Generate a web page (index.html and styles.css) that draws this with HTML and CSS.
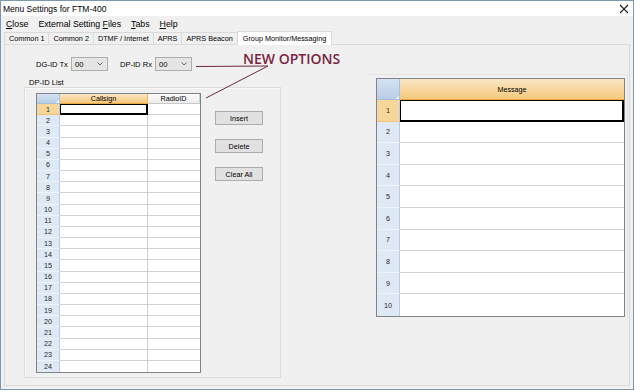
FILE: index.html
```html
<!DOCTYPE html>
<html>
<head>
<meta charset="utf-8">
<link rel="stylesheet" href="styles.css">
</head>
<body>
<div class="window">
  <div class="titlebar">
    <span class="title">Menu Settings for FTM-400</span>
    <svg class="close" width="10" height="10" viewBox="0 0 10 10"><path d="M1 1 L9 9 M9 1 L1 9" stroke="#222" stroke-width="1.1" fill="none"/></svg>
  </div>
  <div class="menubar">
    <span><u>C</u>lose</span>
    <span>External Setting <u>F</u>iles</span>
    <span><u>T</u>abs</span>
    <span><u>H</u>elp</span>
  </div>
  <div class="tabs">
    <div class="tab">Common 1</div>
    <div class="tab">Common 2</div>
    <div class="tab">DTMF / Internet</div>
    <div class="tab">APRS</div>
    <div class="tab">APRS Beacon</div>
    <div class="tab active">Group Monitor/Messaging</div>
  </div>
  <div class="page">
    <div class="left">
      <div class="combos">
        <span class="lbl">DG-ID Tx</span>
        <div class="combo"><span>00</span><svg width="6" height="4" viewBox="0 0 6 4"><path d="M0.5 0.5 L3 3 L5.5 0.5" stroke="#666" fill="none"/></svg></div>
        <span class="lbl">DP-ID Rx</span>
        <div class="combo"><span>00</span><svg width="6" height="4" viewBox="0 0 6 4"><path d="M0.5 0.5 L3 3 L5.5 0.5" stroke="#666" fill="none"/></svg></div>
      </div>
      <div class="listlabel">DP-ID List</div>
      <div class="group">
        <div class="grid idgrid">
          <div class="corner"></div><div class="colh sel">Callsign</div><div class="colh">RadioID</div>
          <div class="rowh sel">1</div><div class="cell cur"></div><div class="cell"></div>
          <div class="rowh">2</div><div class="cell"></div><div class="cell"></div>
          <div class="rowh">3</div><div class="cell"></div><div class="cell"></div>
          <div class="rowh">4</div><div class="cell"></div><div class="cell"></div>
          <div class="rowh">5</div><div class="cell"></div><div class="cell"></div>
          <div class="rowh">6</div><div class="cell"></div><div class="cell"></div>
          <div class="rowh">7</div><div class="cell"></div><div class="cell"></div>
          <div class="rowh">8</div><div class="cell"></div><div class="cell"></div>
          <div class="rowh">9</div><div class="cell"></div><div class="cell"></div>
          <div class="rowh">10</div><div class="cell"></div><div class="cell"></div>
          <div class="rowh">11</div><div class="cell"></div><div class="cell"></div>
          <div class="rowh">12</div><div class="cell"></div><div class="cell"></div>
          <div class="rowh">13</div><div class="cell"></div><div class="cell"></div>
          <div class="rowh">14</div><div class="cell"></div><div class="cell"></div>
          <div class="rowh">15</div><div class="cell"></div><div class="cell"></div>
          <div class="rowh">16</div><div class="cell"></div><div class="cell"></div>
          <div class="rowh">17</div><div class="cell"></div><div class="cell"></div>
          <div class="rowh">18</div><div class="cell"></div><div class="cell"></div>
          <div class="rowh">19</div><div class="cell"></div><div class="cell"></div>
          <div class="rowh">20</div><div class="cell"></div><div class="cell"></div>
          <div class="rowh">21</div><div class="cell"></div><div class="cell"></div>
          <div class="rowh">22</div><div class="cell"></div><div class="cell"></div>
          <div class="rowh">23</div><div class="cell"></div><div class="cell"></div>
          <div class="rowh last">24</div><div class="cell last"></div><div class="cell last"></div>
        </div>
        <div class="buttons">
          <div class="btn">Insert</div>
          <div class="btn">Delete</div>
          <div class="btn">Clear All</div>
        </div>
      </div>
    </div>
    <div class="msgwrap">
      <div class="grid msggrid">
        <div class="corner"></div><div class="colh sel">Message</div>
        <div class="rowh sel">1</div><div class="cell cur"></div>
        <div class="rowh">2</div><div class="cell"></div>
        <div class="rowh">3</div><div class="cell"></div>
        <div class="rowh">4</div><div class="cell"></div>
        <div class="rowh">5</div><div class="cell"></div>
        <div class="rowh">6</div><div class="cell"></div>
        <div class="rowh">7</div><div class="cell"></div>
        <div class="rowh">8</div><div class="cell"></div>
        <div class="rowh">9</div><div class="cell"></div>
        <div class="rowh last">10</div><div class="cell last"></div>
      </div>
    </div>
  </div>
  <svg class="annot-lines" width="634" height="390" viewBox="0 0 634 390">
    <path d="M195 65.5 L267 65 M267 65 L205 97" stroke="#6e2a3e" stroke-width="1" fill="none"/>
  </svg>
  <div class="annot-text">NEW OPTIONS</div>
</div>
</body>
</html>
```

FILE: styles.css
```css
* { box-sizing: border-box; }
html, body { margin: 0; padding: 0; background: #ffffff; }
body { font-family: "Liberation Sans", Arial, sans-serif; color: #000; }

.window {
  width: 634px;
  height: 390px;
  border: 1px solid #7d97ad;
  background: #f0f0f0;
  display: flex;
  flex-direction: column;
  position: relative;
}

.titlebar {
  height: 15px;
  background: #ffffff;
  display: flex;
  align-items: center;
  justify-content: space-between;
  padding: 0 2px 0 2px;
  font-size: 8.5px;
}
.close { margin-right: 2px; }

.menubar {
  height: 15px;
  display: flex;
  align-items: center;
  gap: 10px;
  padding-left: 5px;
  font-size: 8.75px;
}
.menubar u { text-decoration-thickness: 1px; text-underline-offset: 1px; }

.tabs {
  height: 13px;
  display: flex;
  align-items: flex-end;
  padding-left: 3px;
  font-size: 7.25px;
}
.tab {
  height: 12px;
  padding: 0 4px 0 4px;
  border: 1px solid #dadada;
  border-bottom: none;
  margin-right: -1px;
  display: flex;
  align-items: center;
  background: #f0f0f0;
}
.tab.active {
  background: #ffffff;
  height: 14px;
  margin-bottom: -1px;
  padding: 0 5px;
  position: relative;
  z-index: 1;
}

.page {
  height: 342px;
  margin: 0 3px;
  border: 1px solid #dadada;
  display: flex;
  align-items: flex-start;
}

.left {
  margin-left: 19px;
  width: 257px;
  display: flex;
  flex-direction: column;
}
.combos {
  margin-top: 12px;
  height: 14px;
  display: flex;
  align-items: center;
  padding-left: 12px;
  font-size: 7.6px;
}
.lbl { margin-right: 3px; }
.combo {
  width: 37px;
  height: 14px;
  border: 1px solid #adadad;
  background: #e5e5e5;
  display: flex;
  align-items: center;
  justify-content: space-between;
  padding: 0 4px 0 3px;
  margin-right: 12px;
}
.listlabel {
  margin-top: 7px;
  height: 9px;
  line-height: 10px;
  padding-left: 5px;
  font-size: 7.6px;
}
.group {
  height: 291px;
  border: 1px solid #dcdcdc;
  box-shadow: inset 1px 1px 0 #fafafa;
  display: flex;
  align-items: flex-start;
  padding: 5px 0 0 11px;
}

.grid {
  display: grid;
  border: 1px solid #7f8489;
  background: #fff;
  font-size: 7.2px;
}
.idgrid {
  width: 165px;
  height: 280px;
  grid-template-columns: 23px 88px 1fr;
  grid-template-rows: 10px repeat(24, 1fr);
}
.msggrid {
  width: 249px;
  height: 239px;
  grid-template-columns: 23px 1fr;
  grid-template-rows: 21px repeat(10, 1fr);
}

.corner {
  background:
    linear-gradient(135deg, transparent 72%, #eef3fa 72%) no-repeat right bottom / 6px 6px,
    linear-gradient(#d5e2f2, #b9cde6);
  border-right: 1px solid #a8bfdc;
  border-bottom: 1px solid #a8bfdc;
}
.colh {
  display: flex;
  align-items: center;
  justify-content: center;
  background: linear-gradient(#fbfbfb, #ececec);
  border-right: 1px solid #d5d5d5;
  border-bottom: 1px solid #c9c9c9;
}
.colh:last-child { border-right: none; }
.colh.sel {
  background: linear-gradient(#fae6c4, #f5c97c);
  border-right: 1px solid #e9b766;
  border-bottom: 1px solid #e8a843;
}
.msggrid .colh.sel { border-right: none; }

.rowh {
  display: flex;
  align-items: center;
  justify-content: center;
  background: #dfe8f5;
  border-right: 1px solid #b9cce4;
  border-bottom: 1px solid #eef3fa;
  color: #2a2a2a;
}
.rowh.sel { background: #f8d69a; border-bottom-color: #f3c274; }
.cell {
  border-right: 1px solid #cfcfcf;
  border-bottom: 1px solid #d3d3d3;
  background: #fff;
}
.idgrid .cell:nth-child(3n) { border-right: none; }
.msggrid .cell { border-right: none; }
.last { border-bottom: none !important; }
.cell.cur {
  border: 1px solid #000 !important;
  border-right-width: 2px !important;
  border-bottom-width: 2px !important;
}

.buttons {
  margin-left: 14px;
  margin-top: 18px;
  display: flex;
  flex-direction: column;
  gap: 14px;
}
.btn {
  width: 48px;
  height: 14px;
  border: 1px solid #adadad;
  background: #e1e1e1;
  display: flex;
  align-items: center;
  justify-content: center;
  font-size: 7.2px;
}

.msgwrap {
  margin-left: 85px;
  margin-top: 29px;
  width: 262px;
  height: 245px;
  border: 1px solid #e4e4e4;
  border-left-color: transparent;
  border-bottom-color: transparent;
  padding: 3px 0 0 9px;
}

.annot-lines {
  position: absolute;
  left: 0;
  top: 0;
  pointer-events: none;
}
.annot-text {
  position: absolute;
  left: 242px;
  top: 50px;
  font-family: "Open Sans", "Liberation Sans", sans-serif;
  font-size: 14px;
  font-weight: 600;
  line-height: 15px;
  color: #7a2442;
  white-space: nowrap;
}
```
